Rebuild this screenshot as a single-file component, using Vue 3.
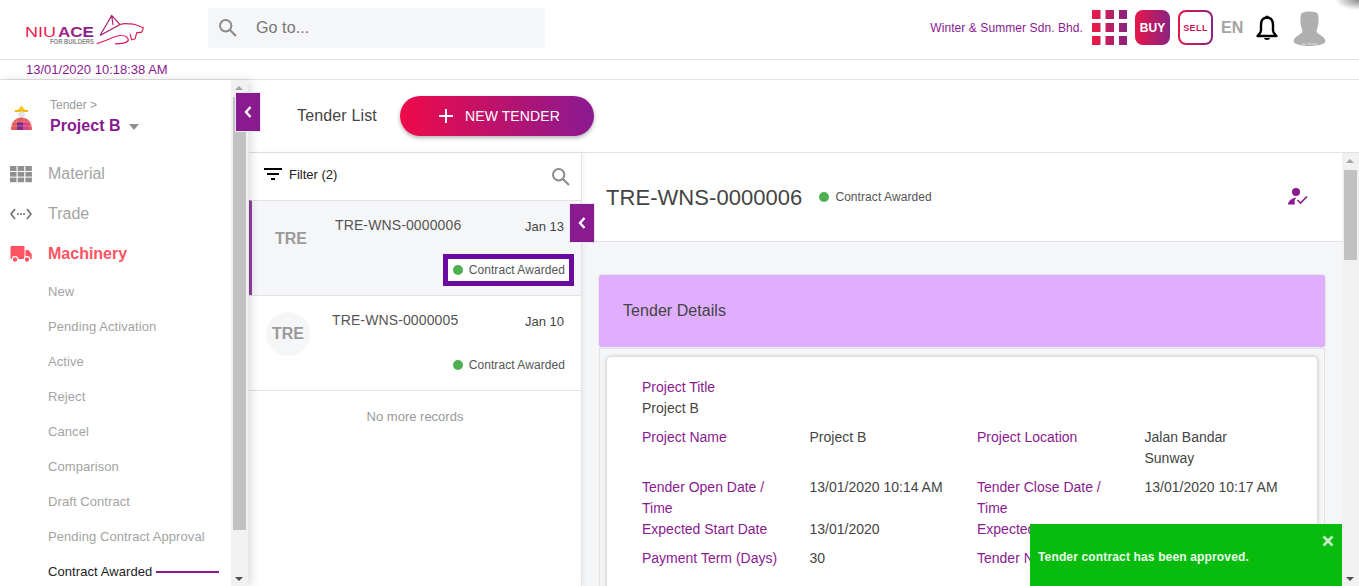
<script setup>
const subItems = [
  'New', 'Pending Activation', 'Active', 'Reject', 'Cancel',
  'Comparison', 'Draft Contract', 'Pending Contract Approval'
]
const tenders = [
  { id: 'TRE-WNS-0000006', date: 'Jan 13', selected: true },
  { id: 'TRE-WNS-0000005', date: 'Jan 10', selected: false }
]
const gridCells = [0, 1, 2].flatMap(r => [0, 1, 2].map(c => ({ x: c * 13.5, y: r * 13 })))
</script>

<template>
  <div class="app">
    <header class="topbar">
      <div class="logo">
        <svg width="130" height="40" viewBox="0 0 130 40">
          <defs>
            <linearGradient id="lg" x1="0" y1="0" x2="1" y2="0">
              <stop offset="0" stop-color="#a81f86" />
              <stop offset="1" stop-color="#7f1f8c" />
            </linearGradient>
            <linearGradient id="lgb" gradientUnits="userSpaceOnUse" x1="76" y1="0" x2="124" y2="0">
              <stop offset="0" stop-color="#8a1f8c" />
              <stop offset="0.55" stop-color="#c8205f" />
              <stop offset="1" stop-color="#e81b4b" />
            </linearGradient>
          </defs>
          <text x="5" y="27" class="logo-word" fill="#ee1a50" textLength="31" lengthAdjust="spacingAndGlyphs">NIU</text>
          <text x="38" y="27" class="logo-word strong" fill="url(#lg)" textLength="36" lengthAdjust="spacingAndGlyphs">ACE</text>
          <text x="30" y="33.5" class="logo-sub" textLength="44" lengthAdjust="spacingAndGlyphs">FOR BUILDERS</text>
          <path d="M80 25.5 L91.7 5.5 L100 14.5 L80 25.5 M91.7 5.5 L93 15 M100 14.5 C103 13.5 106 13.5 108.3 13.8 C111 14 113 14 115 14.5 L123.3 17.8 L121.7 22.2 L116.7 22.8 L115 28.8 L111.7 29.8 L110 23.8" fill="none" stroke="url(#lgb)" stroke-width="1.2" />
          <path d="M76.7 33.8 C82 32 86 30.5 90 28.8 C94 27 97 25.5 100 25.5 C103 25.5 106 26 106.7 27.2 C108 28.5 108.5 29.5 108.3 30.5 C107 32 105 33 103.3 33.2 C100 33.8 97 33.8 95 33.8" fill="none" stroke="#df1c55" stroke-width="1.2" />
        </svg>
      </div>
      <div class="search">
        <svg class="search-icon" width="20" height="20" viewBox="0 0 20 20">
          <circle cx="7.7" cy="7.7" r="5.7" fill="none" stroke="#8c8c8c" stroke-width="2" />
          <path d="M12 12 L18 18" stroke="#8c8c8c" stroke-width="2.2" />
        </svg>
        <span>Go to...</span>
      </div>
      <div class="top-right">
        <span class="company">Winter &amp; Summer Sdn. Bhd.</span>
        <svg class="grid-icon" width="35" height="35" viewBox="0 0 35 35">
          <defs>
            <linearGradient id="gg" gradientUnits="userSpaceOnUse" x1="0" y1="0" x2="35" y2="0">
              <stop offset="0" stop-color="#ee1a45" />
              <stop offset="1" stop-color="#8a2382" />
            </linearGradient>
          </defs>
          <rect v-for="(c, i) in gridCells" :key="i" :x="c.x" :y="c.y" width="8.5" height="9" fill="url(#gg)" />
        </svg>
        <div class="buy">BUY</div>
        <div class="sell"><span>SELL</span></div>
        <span class="lang">EN</span>
        <svg class="bell" width="22" height="26" viewBox="0 0 22 26">
          <path d="M11 2.5 C6.5 2.5 5 6 5 10 L5 15.5 C5 18 3 19.5 1.5 21 L20.5 21 C19 19.5 17 18 17 15.5 L17 10 C17 6 15.5 2.5 11 2.5 Z" fill="none" stroke="#000" stroke-width="2.4" stroke-linejoin="round" />
          <circle cx="11" cy="2" r="1.6" fill="#000" />
          <path d="M8 23 L14 23 C13.6 25.6 8.4 25.6 8 23 Z" fill="#000" />
        </svg>
        <div class="avatar">
          <svg width="33" height="36" viewBox="0 0 33 36">
            <path d="M8 4 C9 0.5 24 0.5 25 4 C26 8 25.5 13 25 16 C24.5 18 23.5 20 23.5 22 C25 24 28 25 30 27 C32.5 29 33 31 31.5 33 C26 37 7 37 1.5 33 C0 31 0.5 29 3 27 C5 25 8 24 9.5 22 C9.5 20 8.5 18 8 16 C7.5 13 7 8 8 4 Z" fill="#b0b0b0" />
            <text x="16.5" y="35" class="noimg" text-anchor="middle">no image</text>
          </svg>
        </div>
      </div>
      <i class="corner"></i>
    </header>

    <div class="datebar">13/01/2020 10:18:38 AM</div>

    <div class="body">
      <aside class="sidebar">
        <div class="side-inner">
          <div class="project">
            <svg class="worker" width="24" height="27" viewBox="0 0 24 27">
              <path d="M11.5 0.5 L15 5 L8 5 Z" fill="#f5c518" />
              <rect x="5" y="5" width="13" height="2" fill="#f0b90b" />
              <circle cx="11.5" cy="9.5" r="3.3" fill="#e3e3e3" />
              <path d="M1 25 C1 16.5 6 12.5 11.5 12.5 C17 12.5 22 16.5 22 25 Z" fill="#e25b58" />
              <path d="M7 17 H13 V25 H7 Z" fill="#7b2b8e" />
              <path d="M13 17 H19 V25 H13 Z" fill="#d8418c" />
              <path d="M1 17 H22 M1 21 H22 M7 12.5 V17 M14 12.5 V17" stroke="#f4a0a0" stroke-width="0.5" fill="none" />
            </svg>
            <div>
              <div class="crumb">Tender &gt;</div>
              <div class="project-name">Project B <i class="caret"></i></div>
            </div>
          </div>
          <nav class="nav">
            <div class="nav-item">
              <svg width="22" height="18" viewBox="0 0 22 18" fill="#8f8f8f">
                <rect x="0" y="1" width="6.5" height="5" /><rect x="7.7" y="1" width="6.5" height="5" /><rect x="15.4" y="1" width="6.5" height="5" />
                <rect x="0" y="7" width="6.5" height="4.6" /><rect x="7.7" y="7" width="6.5" height="4.6" /><rect x="15.4" y="7" width="6.5" height="4.6" />
                <rect x="0" y="12.6" width="6.5" height="4.6" /><rect x="7.7" y="12.6" width="6.5" height="4.6" /><rect x="15.4" y="12.6" width="6.5" height="4.6" />
              </svg>
              <span>Material</span>
            </div>
            <div class="nav-item">
              <svg width="22" height="18" viewBox="0 0 22 18">
                <path d="M5 4 L1 9 L5 14 M17 4 L21 9 L17 14" fill="none" stroke="#6f6f6f" stroke-width="1.6" />
                <circle cx="8" cy="9" r="1" fill="#6f6f6f" /><circle cx="11" cy="9" r="1" fill="#6f6f6f" /><circle cx="14" cy="9" r="1" fill="#6f6f6f" />
              </svg>
              <span>Trade</span>
            </div>
            <div class="nav-item active">
              <svg width="22" height="18" viewBox="0 0 22 18" fill="#ff5364">
                <path d="M1.5 1 H13.5 C14 1 14.5 1.5 14.5 2 V14 H1.5 C1 14 0.5 13.5 0.5 13 V2 C0.5 1.5 1 1 1.5 1 Z" />
                <path d="M15.5 5 H18.5 L21.7 9 V14 H15.5 Z" />
                <circle cx="5" cy="14.5" r="2.8" stroke="#fff" stroke-width="1.2" />
                <circle cx="17" cy="14.5" r="2.8" stroke="#fff" stroke-width="1.2" />
              </svg>
              <span>Machinery</span>
            </div>
          </nav>
          <ul class="sub">
            <li v-for="s in subItems" :key="s">{{ s }}</li>
            <li class="current">Contract Awarded<i class="current-line"></i></li>
          </ul>
        </div>
        <div class="scroll side-scroll">
          <i class="arrow up"></i>
          <div class="thumb"></div>
          <i class="arrow down"></i>
        </div>
        <button class="collapse side-collapse" type="button">
          <svg width="8" height="12" viewBox="0 0 8 12"><path d="M6.5 1 L2 6 L6.5 11" fill="none" stroke="#fff" stroke-width="2.4" /></svg>
        </button>
      </aside>

      <main class="main">
        <div class="toolbar">
          <span class="toolbar-title">Tender List</span>
          <button class="new-btn" type="button">
            <svg width="16" height="16" viewBox="0 0 16 16"><path d="M8 1 V15 M1 8 H15" stroke="#fff" stroke-width="2" /></svg>
            NEW TENDER
          </button>
        </div>
        <div class="panes">
          <section class="list">
            <div class="filter">
              <svg width="18" height="12" viewBox="0 0 18 12">
                <path d="M0 1 H18 M3 6 H15 M7 11 H11" stroke="#000" stroke-width="2" />
              </svg>
              <span class="filter-label">Filter (2)</span>
              <svg class="filter-search" width="20" height="20" viewBox="0 0 20 20">
                <circle cx="7.7" cy="7.7" r="5.7" fill="none" stroke="#8c8c8c" stroke-width="2" />
                <path d="M12 12 L18 18" stroke="#8c8c8c" stroke-width="2.2" />
              </svg>
            </div>
            <article v-for="t in tenders" :key="t.id" class="tender" :class="{ selected: t.selected }">
              <div class="badge">TRE</div>
              <div class="tender-main">
                <div class="tender-top">
                  <span class="tender-id">{{ t.id }}</span>
                  <span class="tender-date">{{ t.date }}</span>
                </div>
                <div class="tender-status">
                  <span class="status"><i class="dot"></i>Contract Awarded</span>
                </div>
              </div>
            </article>
            <div class="no-more">No more records</div>
            <button class="collapse list-collapse" type="button">
              <svg width="8" height="12" viewBox="0 0 8 12"><path d="M6.5 1 L2 6 L6.5 11" fill="none" stroke="#fff" stroke-width="2.4" /></svg>
            </button>
          </section>

          <section class="detail">
            <div class="detail-head">
              <h1>TRE-WNS-0000006</h1>
              <span class="status head-status"><i class="dot"></i>Contract Awarded</span>
              <svg class="person" width="20" height="17" viewBox="0 0 20 17">
                <circle cx="8" cy="4" r="4" fill="#8a1a90" />
                <path d="M0 16.5 C0.5 12.5 4 10 8.5 9.5 C6.5 11 6 14 7 16.5 Z" fill="#8a1a90" />
                <path d="M9.5 12 L12.5 15 L19 8.5" fill="none" stroke="#8a1a90" stroke-width="1.6" />
              </svg>
            </div>
            <div class="detail-body">
              <div class="section-title">Tender Details</div>
              <div class="section-wrap">
                <div class="card">
                  <div class="field-stack">
                    <div class="label">Project Title</div>
                    <div class="value">Project B</div>
                  </div>
                  <div class="row gap">
                    <div class="label">Project Name</div>
                    <div class="value">Project B</div>
                    <div class="label">Project Location</div>
                    <div class="value">Jalan Bandar Sunway</div>
                  </div>
                  <div class="row">
                    <div class="label">Tender Open Date / Time</div>
                    <div class="value">13/01/2020 10:14 AM</div>
                    <div class="label">Tender Close Date / Time</div>
                    <div class="value">13/01/2020 10:17 AM</div>
                  </div>
                  <div class="row gap">
                    <div class="label">Expected Start Date</div>
                    <div class="value">13/01/2020</div>
                    <div class="label clipped">Expected</div>
                    <div class="value"></div>
                  </div>
                  <div class="row">
                    <div class="label">Payment Term (Days)</div>
                    <div class="value">30</div>
                    <div class="label">Tender N</div>
                    <div class="value"></div>
                  </div>
                </div>
              </div>
            </div>
          </section>
          <div class="scroll page-scroll">
            <i class="arrow up"></i>
            <div class="thumb"></div>
            <i class="arrow down"></i>
          </div>
        </div>
      </main>
    </div>

    <div class="toast">
      <span>Tender contract has been approved.</span>
      <svg class="toast-x" width="12" height="12" viewBox="0 0 12 12"><path d="M1.5 1.5 L10.5 10.5 M10.5 1.5 L1.5 10.5" stroke="#c9f0c9" stroke-width="2.6" /></svg>
    </div>
  </div>
</template>

<style>
html, body { margin: 0; padding: 0; overflow: hidden; background: #fff; }
</style>

<style scoped>
* { box-sizing: border-box; }
.app {
  position: relative;
  width: 1359px;
  height: 586px;
  overflow: hidden;
  display: flex;
  flex-direction: column;
  font-family: "Liberation Sans", Arial, sans-serif;
  color: #444;
  background: #fff;
}
.topbar {
  flex: 0 0 60px;
  display: flex;
  align-items: flex-start;
  border-bottom: 1px solid #e2e2e2;
  position: relative;
}
.logo { width: 208px; padding: 0 0 0 20px; height: 59px; display: flex; align-items: center; }
.logo-word { font: 400 15.5px "Liberation Sans", sans-serif; }
.logo-word.strong { font-weight: 700; }
.logo-sub { font: 700 6.5px "Liberation Sans", sans-serif; fill: #8b8b8b; }
.search {
  width: 337px;
  height: 40px;
  margin-top: 8px;
  background: #f5f6f8;
  display: flex;
  align-items: center;
  padding-left: 10px;
  font-size: 16px;
  letter-spacing: 0.1px;
  color: #757575;
}
.search-icon { margin-right: 18px; }
.top-right {
  margin-left: auto;
  display: flex;
  align-items: center;
  height: 55px;
  padding-right: 33px;
}
.company { font-size: 12px; letter-spacing: 0.08px; color: #8a1a90; margin-right: 9px; }
.grid-icon { display: block; margin-right: 8px; }
.buy {
  width: 35px;
  height: 35px;
  border-radius: 8px;
  background: linear-gradient(90deg, #e6164a, #8a2382);
  color: #fff;
  font-weight: 700;
  font-size: 12px;
  display: flex;
  align-items: center;
  justify-content: center;
  margin-right: 8px;
}
.sell {
  width: 35px;
  height: 35px;
  border-radius: 8px;
  padding: 2px;
  background: linear-gradient(90deg, #e6164a, #8a2382);
  margin-right: 8px;
}
.sell span {
  display: flex;
  width: 100%;
  height: 100%;
  background: #fff;
  border-radius: 6px;
  align-items: center;
  justify-content: center;
  font-size: 9px;
  font-weight: 700;
  letter-spacing: 0.4px;
  color: #c21a5e;
}
.lang { font-size: 16px; font-weight: 700; color: #a3a3a3; margin-right: 13px; width: 22px; }
.bell { display: block; margin: 1px 15px 0 0; }
.avatar { width: 33px; height: 36px; margin-top: 1px; }
.avatar svg { display: block; }
.noimg { font: 4px "Liberation Sans", sans-serif; fill: #e4e4e4; }
.corner {
  position: absolute;
  top: 0;
  right: 0;
  width: 24px;
  height: 10px;
  background: radial-gradient(ellipse at 100% 0, rgba(0,0,0,.45), rgba(0,0,0,0) 72%);
}

.datebar {
  flex: 0 0 20px;
  border-bottom: 1px solid #e2e2e2;
  padding-left: 26px;
  font-size: 13px;
  line-height: 19px;
  color: #8a1a90;
}

.body { flex: 1; display: flex; min-height: 0; }
.sidebar {
  position: relative;
  flex: 0 0 248px;
  display: flex;
  min-height: 0;
  box-shadow: 4px 0 8px rgba(0,0,0,.12);
  z-index: 2;
  background: #fff;
}
.side-inner { width: 231px; overflow: hidden; }
.project { display: flex; padding: 18px 0 0 10px; height: 74px; }
.worker { margin: 7px 16px 0 0; }
.crumb { font-size: 12px; line-height: 14px; color: #9a9a9a; }
.project-name { font-size: 16px; letter-spacing: 0.05px; line-height: 28px; font-weight: 700; color: #8a1a90; display: flex; align-items: center; }
.caret {
  display: inline-block;
  margin: 2px 0 0 8px;
  border-left: 5px solid transparent;
  border-right: 5px solid transparent;
  border-top: 6px solid #8f8f8f;
}
.nav-item {
  height: 40px;
  display: flex;
  align-items: center;
  padding-left: 10px;
  font-size: 16px;
  color: #a3a3a3;
}
.nav-item svg { margin-right: 16px; display: block; }
.nav-item.active { color: #ff5364; font-weight: 700; }
.sub { list-style: none; margin: 0; padding: 0 0 0 48px; }
.sub li {
  height: 35px;
  line-height: 35px;
  font-size: 13px;
  letter-spacing: 0.08px;
  color: #a3a3a3;
  white-space: nowrap;
  display: flex;
  align-items: center;
}
.sub li.current { color: #222; }
.current-line { flex: 0 0 63px; height: 2px; background: #8a1a90; margin-left: 4px; }

.scroll {
  position: relative;
  width: 17px;
  background: #f1f1f1;
}
.side-scroll { height: 100%; }
.side-scroll .thumb { position: absolute; top: 17px; left: 2px; right: 2px; height: 433px; background: #c1c1c1; }
.page-scroll .thumb { position: absolute; top: 17px; left: 2px; right: 2px; height: 90px; background: #c1c1c1; }
.arrow { position: absolute; left: 4px; width: 0; height: 0; border-left: 4px solid transparent; border-right: 4px solid transparent; }
.arrow.up { top: 6px; border-bottom: 4px solid #a3a3a3; }
.arrow.down { bottom: 5px; border-top: 4px solid #505050; }

.collapse {
  position: absolute;
  width: 26px;
  height: 40px;
  padding: 0;
  border: 1px solid #e8e8e8;
  background: #8a1a90;
  display: flex;
  align-items: center;
  justify-content: center;
  z-index: 3;
}
.side-collapse { top: 12px; left: 235px; }
.list-collapse { top: 50px; left: 320px; }

.main { flex: 1; min-width: 0; display: flex; flex-direction: column; padding-left: 1px; }
.toolbar {
  flex: 0 0 73px;
  border-bottom: 1px solid #e2e2e8;
  display: flex;
  align-items: center;
  padding: 0 0 0 48px;
}
.toolbar-title { font-size: 16px; letter-spacing: 0.15px; color: #444; margin-right: 23px; }
.new-btn {
  width: 194px;
  height: 40px;
  border: 0;
  padding: 0 0 0 4px;
  border-radius: 20px;
  background: linear-gradient(90deg, #ee0a4a, #8a1a90);
  box-shadow: 0 2px 4px rgba(0,0,0,.3);
  color: #fff;
  font: 14px "Liberation Sans", sans-serif;
  letter-spacing: 0.1px;
  display: flex;
  align-items: center;
  justify-content: center;
  gap: 11px;
}
.panes { flex: 1; display: flex; min-height: 0; }
.list {
  position: relative;
  flex: 0 0 333px;
  border-right: 1px solid #e2e2e8;
  background: #fff;
  box-shadow: 2px 0 5px rgba(0,0,0,.05);
  z-index: 1;
}
.filter {
  height: 47px;
  display: flex;
  align-items: center;
  padding: 0 10px 5px 15px;
  font-size: 13px;
  color: #222;
}
.filter-label { margin-left: 7px; }
.filter-search { margin-left: auto; margin-top: 5px; }
.tender {
  height: 95px;
  display: flex;
  border-top: 1px solid #e2e2e8;
  padding: 0 16px 0 17px;
}
.tender .badge { background: #f5f6f8; }
.tender.selected {
  background: #f5f6f8;
  border-left: 3px solid #8f3f9e;
  padding-left: 17px;
}
.tender.selected .badge { background: transparent; }
.badge {
  flex: 0 0 44px;
  width: 44px;
  height: 44px;
  border-radius: 50%;
  margin-top: 16px;
  display: flex;
  align-items: center;
  justify-content: center;
  font-size: 16px;
  font-weight: 700;
  color: #9a9a9a;
}
.tender-main { flex: 1; padding: 16px 0 0 22px; min-width: 0; }
.tender-top { display: flex; justify-content: space-between; font-size: 14px; line-height: 16px; color: #555; }
.tender-id { letter-spacing: 0.12px; }
.tender-date { font-size: 13px; margin: 2px 1px 0 0; color: #444; }
.tender-status { display: flex; justify-content: flex-end; margin-top: 24px; height: 22px; }
.status { display: inline-flex; align-items: center; font-size: 12px; letter-spacing: 0.07px; color: #555; }
.dot { width: 10px; height: 10px; border-radius: 50%; background: #4caf50; margin-right: 6px; }
.tender.selected .status {
  background: #fff;
  outline: 5px solid #6a0a9e;
  padding: 0 4px 0 5px;
  margin-right: -4px;
}
.no-more { border-top: 1px solid #e2e2e8; text-align: center; font-size: 13px; color: #999; padding-top: 18px; }

.detail { flex: 1; min-width: 0; display: flex; flex-direction: column; background: #f5f6f8; }
.detail-head {
  flex: 0 0 89px;
  background: #fff;
  border-bottom: 1px solid #e2e2e8;
  display: flex;
  align-items: center;
  padding: 0 34px 0 24px;
}
.detail-head h1 { margin: 2px 0 0; font-size: 22px; letter-spacing: 0.05px; font-weight: 400; color: #444; }
.head-status { margin-left: 17px; }
.person { margin: -2px 0 0 auto; }
.detail-body { flex: 1; padding: 33px 17px 0 17px; min-height: 0; }
.section-title {
  height: 72px;
  background: #e0aeff;
  border-radius: 3px;
  box-shadow: 0 0 2px rgba(0,0,0,.2);
  display: flex;
  align-items: center;
  padding-left: 24px;
  font-size: 16px;
  letter-spacing: 0.05px;
  color: #444;
}
.section-wrap {
  border: 1px solid #e2e2e2;
  padding: 8px 7px 0;
  height: 400px;
  margin-top: 1px;
}
.card {
  background: #fff;
  border-radius: 4px;
  box-shadow: 0 0 4px rgba(0,0,0,.25);
  padding: 20px 35px 0;
  height: 300px;
  font-size: 14px;
  line-height: 21px;
}
.label { color: #8a1a90; }
.value { color: #444; }
.row { display: grid; grid-template-columns: 167.5px 167.5px 167.5px 1fr; }
.field-stack { margin-bottom: 8px; }
.row .value { padding-right: 3px; }
.row .label { padding-right: 24px; }
.row .label.clipped { padding-right: 0; width: 53px; overflow: hidden; white-space: nowrap; }
.row.gap { margin-bottom: 8px; }

.toast {
  position: absolute;
  left: 1030px;
  top: 524px;
  width: 312px;
  height: 62px;
  background: #08bc0e;
  color: #eafbea;
  font-size: 12px;
  letter-spacing: 0.15px;
  font-weight: 700;
  padding: 25px 8px 0;
  line-height: 16px;
  z-index: 5;
}
.toast-x { position: absolute; top: 11px; right: 8px; }
</style>
